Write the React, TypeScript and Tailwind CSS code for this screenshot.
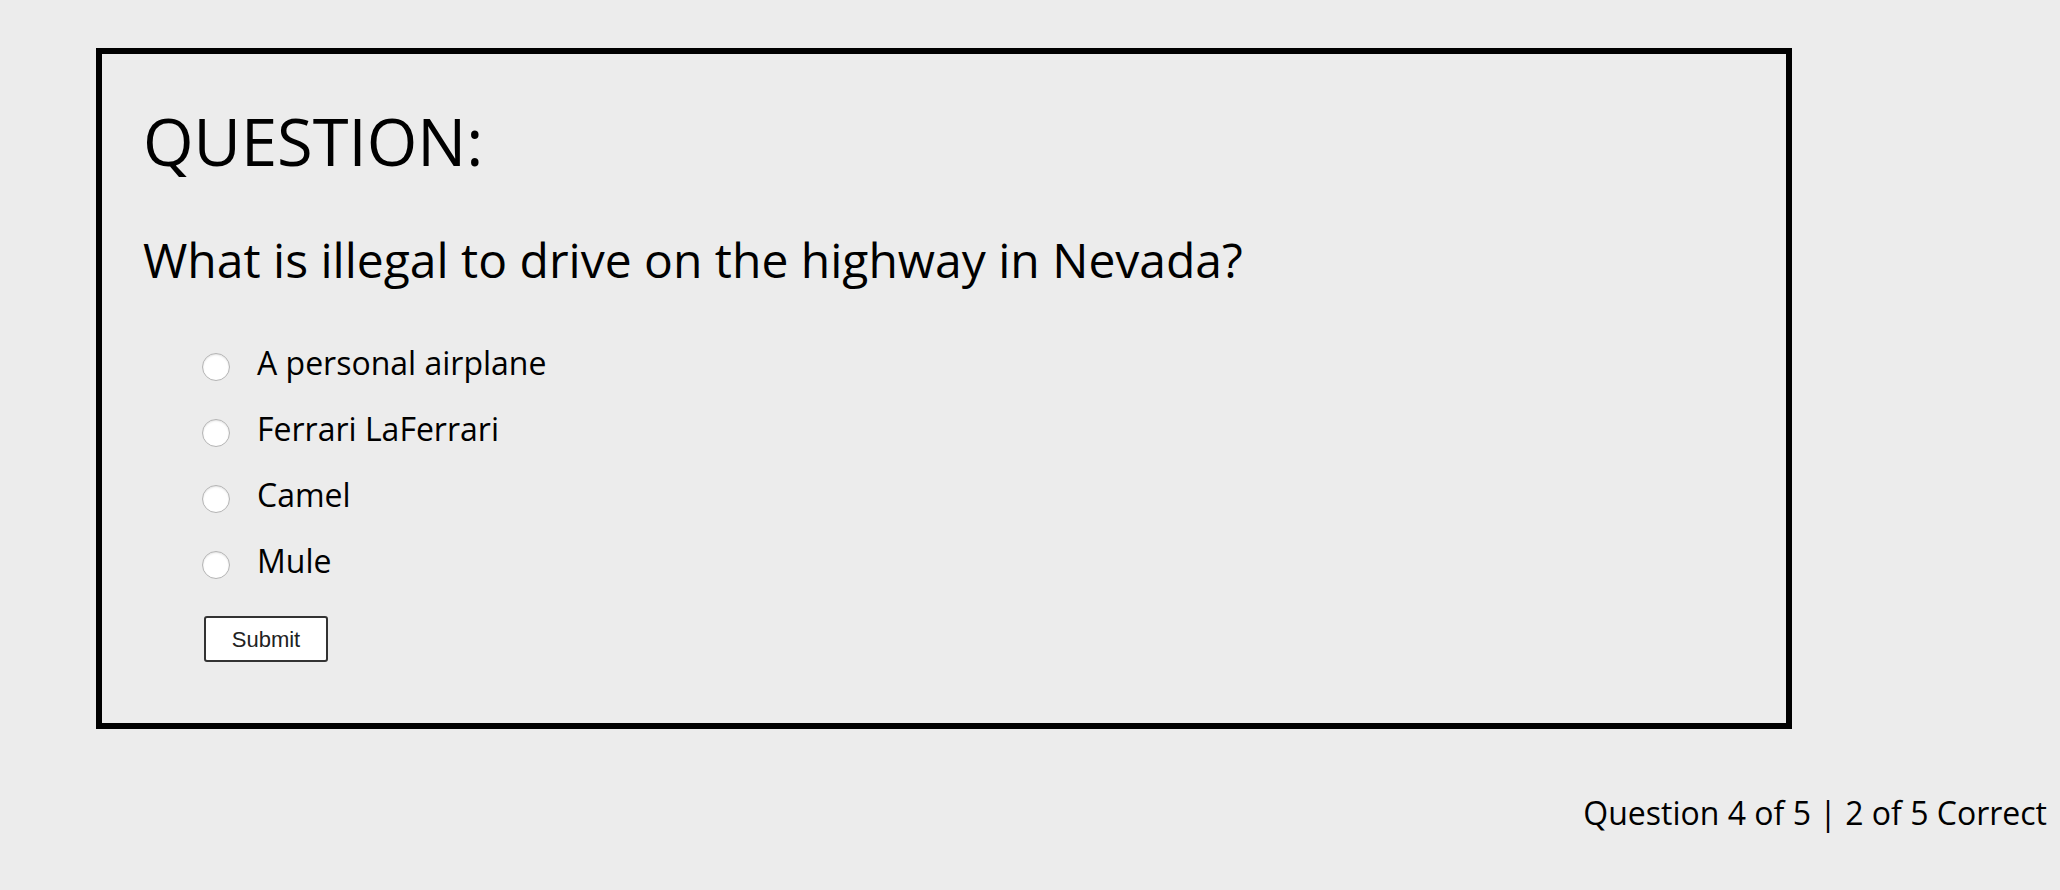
import React, { useState } from 'react';

const options = ['A personal airplane', 'Ferrari LaFerrari', 'Camel', 'Mule'];

export default function App() {
  const [picked, setPicked] = useState<number | null>(null);

  return (
    <div className="min-h-screen w-full bg-[#ececec] text-black font-['Open_Sans',sans-serif] pt-[48px] pb-[40px]">
      {/* Question card */}
      <div className="ml-[96px] w-[1696px] border-[6px] border-black pt-[47px] pb-[61px] pl-[41px]">
        <h1 className="text-[65px] leading-[80px] font-normal">QUESTION:</h1>
        <h2 className="mt-[51px] text-[48px] leading-[56px] font-normal">
          What is illegal to drive on the highway in Nevada?
        </h2>

        <div className="mt-[42px] ml-[59px] flex flex-col">
          {options.map((opt, i) => (
            <label key={opt} className="flex h-[66px] items-center cursor-pointer" onClick={() => setPicked(i)}>
              <span className="mt-[7px] flex h-[28px] w-[28px] items-center justify-center rounded-full border-[1.5px] border-[#b4b4b4] bg-white shadow-[inset_0_1px_2px_rgba(0,0,0,0.12)]">
                {picked === i && <span className="h-[12px] w-[12px] rounded-full bg-[#333]" />}
              </span>
              <span className="ml-[27px] text-[32px] leading-[40px]">{opt}</span>
            </label>
          ))}
        </div>

        <button className="mt-[22px] ml-[61px] flex h-[46px] w-[124px] items-center justify-center rounded-[3px] border-2 border-[#333] bg-white font-['Liberation_Sans',Arial,sans-serif] text-[22px] text-[#222]">
          Submit
        </button>
      </div>

      {/* Progress */}
      <div className="mt-[64px] pr-[13px] text-right text-[32px] leading-[40px]">
        Question 4 of 5 | 2 of 5 Correct
      </div>
    </div>
  );
}
